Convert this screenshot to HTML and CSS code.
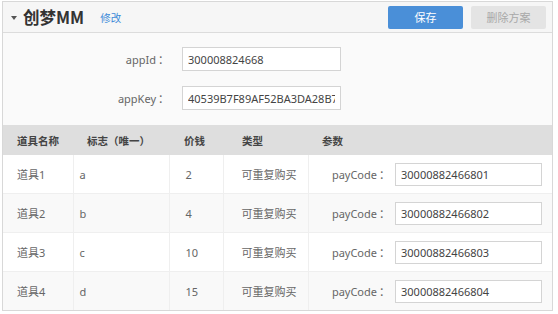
FILE: index.html
```html
<!DOCTYPE html>
<html lang="zh-CN">
<head>
  <meta charset="UTF-8">
  <title>创梦MM</title>
  <link rel="stylesheet" href="styles.css">
</head>
<body>
  <div class="panel">
    <div class="panel-head">
      <span class="caret"></span>
      <span class="title">创梦MM</span>
      <a class="edit" href="#">修改</a>
      <div class="actions">
        <button class="btn btn-primary">保存</button>
        <button class="btn btn-muted">删除方案</button>
      </div>
    </div>

    <div class="form">
      <div class="form-row">
        <label>appId<span class="colon">：</span></label>
        <input class="field" value="300008824668">
      </div>
      <div class="form-row">
        <label>appKey<span class="colon">：</span></label>
        <input class="field" value="40539B7F89AF52BA3DA28B70C6">
      </div>
    </div>

    <table class="items">
      <colgroup>
        <col class="w1"><col class="w2"><col class="w3"><col class="w4"><col>
      </colgroup>
      <thead>
        <tr>
          <th class="c1">道具名称</th>
          <th class="c2">标志（唯一）</th>
          <th class="c3">价钱</th>
          <th class="c4">类型</th>
          <th class="c5">参数</th>
        </tr>
      </thead>
      <tbody>
        <tr>
          <td class="c1">道具1</td><td class="c2">a</td><td class="c3">2</td><td class="c4">可重复购买</td>
          <td class="c5"><div class="param"><span>payCode<span class="colon">：</span></span><input class="field" value="30000882466801"></div></td>
        </tr>
        <tr>
          <td class="c1">道具2</td><td class="c2">b</td><td class="c3">4</td><td class="c4">可重复购买</td>
          <td class="c5"><div class="param"><span>payCode<span class="colon">：</span></span><input class="field" value="30000882466802"></div></td>
        </tr>
        <tr>
          <td class="c1">道具3</td><td class="c2">c</td><td class="c3">10</td><td class="c4">可重复购买</td>
          <td class="c5"><div class="param"><span>payCode<span class="colon">：</span></span><input class="field" value="30000882466803"></div></td>
        </tr>
        <tr>
          <td class="c1">道具4</td><td class="c2">d</td><td class="c3">15</td><td class="c4">可重复购买</td>
          <td class="c5"><div class="param"><span>payCode<span class="colon">：</span></span><input class="field" value="30000882466804"></div></td>
        </tr>
      </tbody>
    </table>
  </div>
</body>
</html>
```

FILE: styles.css
```css
body {
  margin: 0;
  background: #fff;
  font-family: "Noto Sans", "Noto Sans CJK SC", sans-serif;
  font-size: 11px;
  color: #666;
}

.panel {
  width: 549px;
  margin: 1px 0 0 2px;
  border: 1px solid #d8d8d8;
  background: #fafafa;
}

.panel-head {
  height: 30px;
  display: flex;
  align-items: center;
  padding: 0 6px 0 8px;
  background: #f6f6f6;
  border-bottom: 1px solid #dcdcdc;
}

.caret {
  width: 0;
  height: 0;
  border-left: 3px solid transparent;
  border-right: 3px solid transparent;
  border-top: 4px solid #555;
  margin-right: 6px;
  margin-top: 1px;
}

.title {
  font-family: "Noto Sans CJK SC", sans-serif;
  font-size: 16.5px;
  font-weight: bold;
  color: #333;
}

.edit {
  margin-left: 16px;
  color: #3b8ad8;
  text-decoration: none;
  font-family: "Noto Sans CJK SC", sans-serif;
  font-size: 10.5px;
}

.actions {
  margin-left: auto;
  display: flex;
  gap: 8px;
}

.btn {
  width: 75px;
  height: 23px;
  border: 0;
  border-radius: 2px;
  font-family: "Noto Sans CJK SC", sans-serif;
  font-size: 11px;
  padding: 0;
}

.btn-primary {
  background: #4a8fd8;
  color: #fff;
}

.btn-muted {
  background: #e4e4e4;
  color: #a8a8a8;
}

.form {
  height: 92px;
  padding-top: 14px;
  box-sizing: border-box;
}

.form-row {
  display: flex;
  align-items: center;
  height: 24px;
  margin-bottom: 15px;
}

.form-row label {
  width: 166px;
  text-align: right;
  font-size: 11px;
  color: #666;
  margin-right: 13px;
}

.colon {
  font-family: "Noto Sans CJK TC", sans-serif;
  margin-left: 2px;
}

.field {
  box-sizing: border-box;
  width: 159px;
  height: 24px;
  border: 1px solid #d4d4d4;
  background: #fff;
  padding: 0 5px;
  font-family: "Noto Sans", sans-serif;
  font-size: 11px;
  color: #444;
  outline: none;
}

.items {
  width: 100%;
  table-layout: fixed;
  border-collapse: collapse;
  background: #fff;
}

.w1 { width: 70px; }
.w2 { width: 96px; }
.w3 { width: 54px; }
.w4 { width: 85px; }

.items th {
  height: 30px;
  padding: 0;
  background: #dedede;
  text-align: left;
  font-family: "Noto Sans CJK SC", sans-serif;
  font-weight: bold;
  color: #444;
  font-size: 10.5px;
  white-space: nowrap;
}

.items td {
  height: 38px;
  padding: 0;
  border-left: 1px solid #efefef;
  border-top: 1px solid #efefef;
  color: #666;
  font-size: 11px;
  white-space: nowrap;
}

.items td:first-child {
  border-left: 0;
}

.items tbody tr:nth-child(even) td {
  background: #f9f9f9;
}

.items tbody tr:first-child td {
  border-top: 0;
}

th.c1, td.c1 { padding-left: 14px; }
th.c2 { padding-left: 14px; }
td.c2 { padding-left: 6px; }
th.c3 { padding-left: 15px; }
td.c3 { padding-left: 16px; }
th.c4 { padding-left: 19px; }
td.c4 { padding-left: 18px; }
th.c5 { padding-left: 14px; }

.param {
  display: flex;
  align-items: center;
  justify-content: flex-end;
  padding-right: 10px;
  gap: 5px;
  font-size: 11px;
}

.param .field {
  width: 147px;
  height: 23px;
}
```
